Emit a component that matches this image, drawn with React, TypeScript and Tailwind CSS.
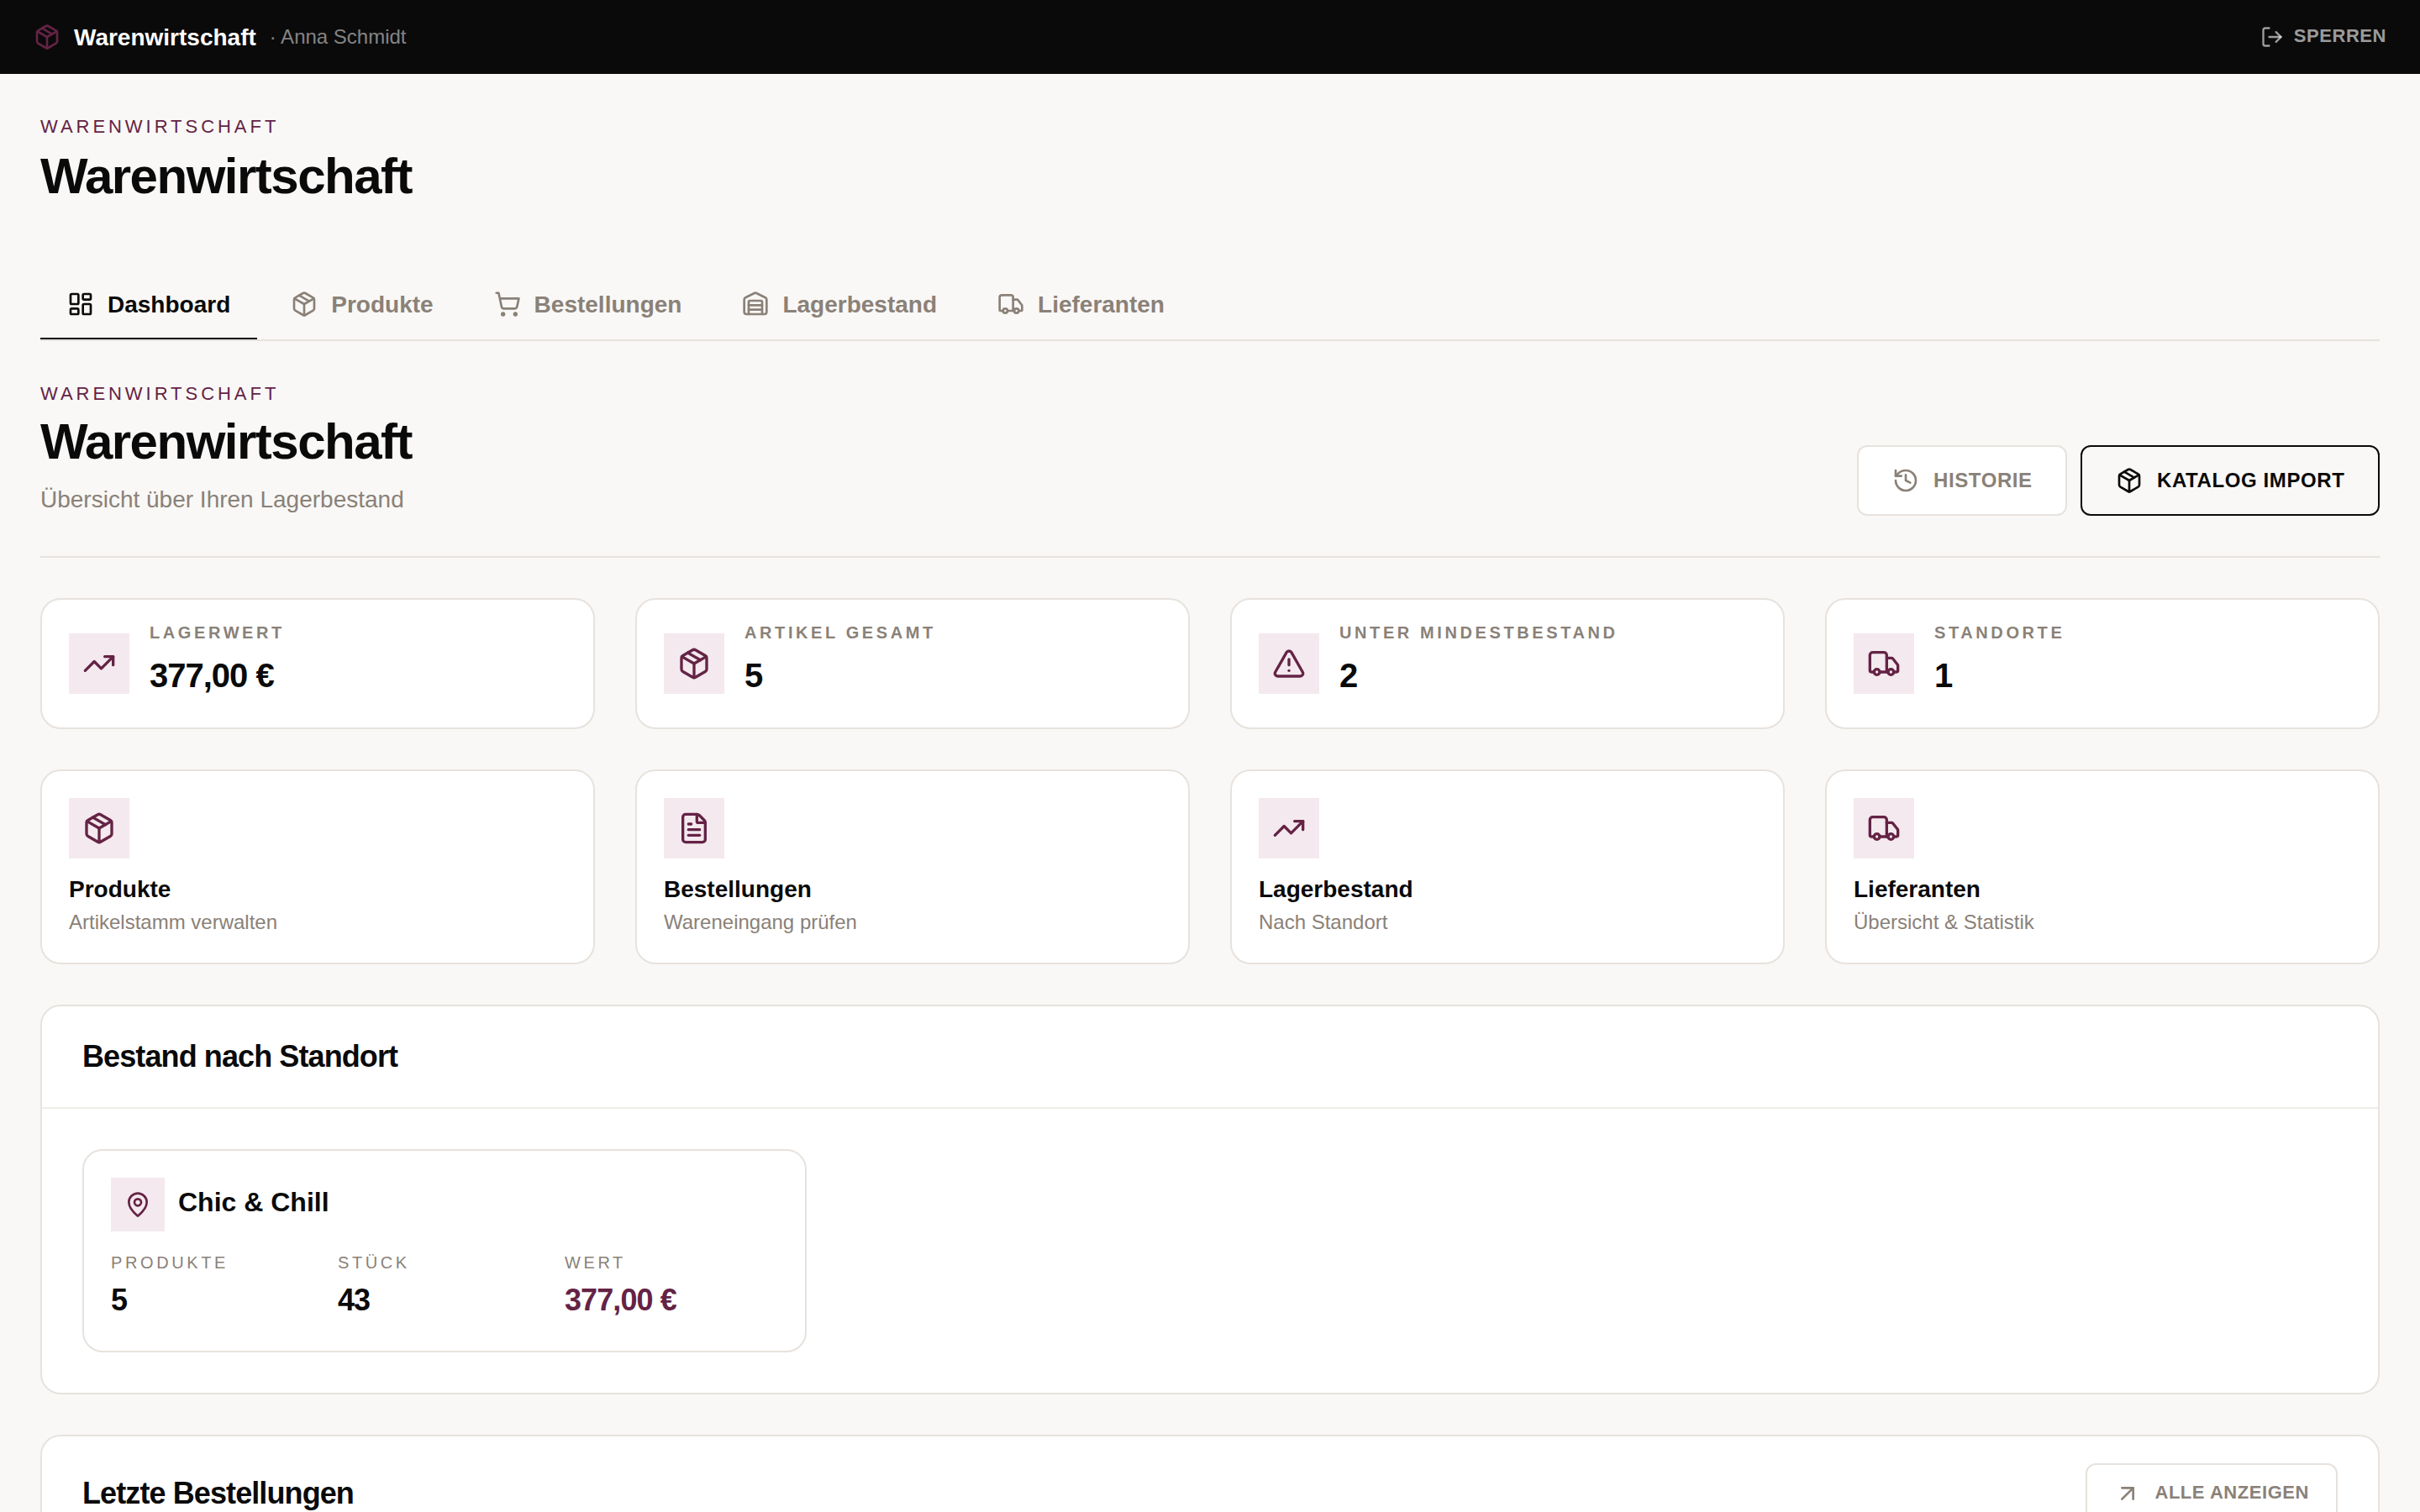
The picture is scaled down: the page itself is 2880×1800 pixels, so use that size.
import React from "react";
import {
  ArrowUpRight,
  FileText,
  History,
  LayoutDashboard,
  LogOut,
  MapPin,
  Package,
  ShoppingCart,
  TrendingUp,
  TriangleAlert,
  Truck,
  Warehouse,
} from "lucide-react";

const tabs = [
  { label: "Dashboard", icon: LayoutDashboard, active: true },
  { label: "Produkte", icon: Package },
  { label: "Bestellungen", icon: ShoppingCart },
  { label: "Lagerbestand", icon: Warehouse },
  { label: "Lieferanten", icon: Truck },
];

const stats = [
  { label: "Lagerwert", value: "377,00 €", icon: TrendingUp },
  { label: "Artikel gesamt", value: "5", icon: Package },
  { label: "Unter Mindestbestand", value: "2", icon: TriangleAlert },
  { label: "Standorte", value: "1", icon: Truck },
];

const links = [
  { title: "Produkte", text: "Artikelstamm verwalten", icon: Package },
  { title: "Bestellungen", text: "Wareneingang prüfen", icon: FileText },
  { title: "Lagerbestand", text: "Nach Standort", icon: TrendingUp },
  { title: "Lieferanten", text: "Übersicht & Statistik", icon: Truck },
];

const location = {
  name: "Chic & Chill",
  figures: [
    { label: "Produkte", value: "5" },
    { label: "Stück", value: "43" },
    { label: "Wert", value: "377,00 €", accent: true },
  ],
};

const TopBar = () => (
  <header className="flex h-[88px] items-center justify-between bg-[#0a0a0a] px-10">
    <div className="flex items-center gap-4">
      <Package size={32} className="text-[#642345]" />
      <span className="pt-0.5 text-[28px] leading-10 font-bold text-white">
        Warenwirtschaft
      </span>
      <span className="text-2xl text-white/50">· Anna Schmidt</span>
    </div>
    <button className="flex items-center gap-3 text-[22px] leading-8 font-bold tracking-wide text-white/60 uppercase">
      <LogOut size={28} />
      <span className="pb-0.5">Sperren</span>
    </button>
  </header>
);

const Overline = () => (
  <p className="text-[22px] leading-[30px] tracking-[0.18em] text-[#642345] uppercase">
    Warenwirtschaft
  </p>
);

const IconBox = ({ icon: Icon }: { icon: React.ElementType }) => (
  <div className="flex size-[72px] shrink-0 items-center justify-center bg-[#f4e9ee] text-[#642345]">
    <Icon size={40} />
  </div>
);

const App = () => {
  return (
    <div className="h-[1800px] w-[2880px] overflow-hidden bg-[#f9f8f6] font-['Liberation_Sans',Arial,sans-serif] text-[#0a0a0a]">
      <TopBar />

      <main className="px-12 pt-12">
        <Overline />
        <h1 className="mt-2 text-[60px] leading-[72px] font-bold tracking-tight">
          Warenwirtschaft
        </h1>

        <nav className="mt-[74px] flex gap-2 border-b-2 border-[#e7e2dd]">
          {tabs.map(({ label, icon: Icon, active }) => (
            <button
              key={label}
              className={`flex h-[84px] items-center gap-4 border-b-2 px-8 pt-0.5 text-[28px] leading-[42px] font-bold ${
                active
                  ? "border-[#0a0a0a] text-[#0a0a0a]"
                  : "border-transparent text-[#8a8178]"
              }`}
            >
              <Icon size={32} />
              <span className="pt-0.5">{label}</span>
            </button>
          ))}
        </nav>

        <div className="flex items-end justify-between border-b-2 border-[#e7e2dd] py-12">
          <div>
            <Overline />
            <h2 className="mt-1.5 text-[60px] leading-[72px] font-bold tracking-tight">
              Warenwirtschaft
            </h2>
            <p className="mt-[13px] text-[28px] leading-[39px] text-[#8a8178]">
              Übersicht über Ihren Lagerbestand
            </p>
          </div>
          <div className="flex gap-4 text-2xl font-bold tracking-wide">
            <button className="flex h-[84px] w-[250px] items-center gap-[17px] rounded-xl border-2 border-[#e7e2dd] bg-white pl-10 text-[#8a8178] uppercase">
              <History size={32} />
              Historie
            </button>
            <button className="flex h-[84px] w-[356px] items-center gap-[17px] rounded-xl border-2 border-[#0a0a0a] pl-10 uppercase">
              <Package size={32} />
              Katalog Import
            </button>
          </div>
        </div>

        <div className="mt-12 grid grid-cols-4 gap-12">
          {stats.map((stat) => (
            <div
              key={stat.label}
              className="flex items-center gap-6 rounded-3xl border-2 border-[#e7e2dd] bg-white px-8 py-6"
            >
              <IconBox icon={stat.icon} />
              <div className="pb-2">
                <p className="text-xl leading-[30px] font-bold tracking-[0.18em] text-[#8a8178] uppercase">
                  {stat.label}
                </p>
                <p className="mt-1.5 text-[40px] leading-[60px] font-bold tracking-tight">
                  {stat.value}
                </p>
              </div>
            </div>
          ))}
        </div>

        <div className="mt-12 grid grid-cols-4 gap-12">
          {links.map((link) => (
            <div
              key={link.title}
              className="rounded-3xl border-2 border-[#e7e2dd] bg-white p-8"
            >
              <IconBox icon={link.icon} />
              <h3 className="mt-[17px] text-[28px] leading-10 font-bold">
                {link.title}
              </h3>
              <p className="mt-[3px] text-2xl leading-8 text-[#8a8178]">
                {link.text}
              </p>
            </div>
          ))}
        </div>

        <section className="mt-12 rounded-3xl border-2 border-[#e7e2dd] bg-white">
          <div className="border-b-2 border-[#f0edea] px-12 py-8">
            <h2 className="text-4xl leading-14 font-bold tracking-tight">
              Bestand nach Standort
            </h2>
          </div>
          <div className="grid grid-cols-3 gap-[49px] p-12">
            <div className="rounded-3xl border-2 border-[#e7e2dd] p-8">
              <div className="flex items-center gap-4">
                <div className="flex size-16 items-center justify-center bg-[#f4e9ee] text-[#642345]">
                  <MapPin size={32} />
                </div>
                <h3 className="pb-1.5 text-[32px] leading-11 font-bold">
                  {location.name}
                </h3>
              </div>
              <div className="mt-[22px] grid grid-cols-3 gap-4">
                {location.figures.map((figure) => (
                  <div key={figure.label}>
                    <p className="text-xl leading-[30px] tracking-[0.18em] text-[#8a8178] uppercase">
                      {figure.label}
                    </p>
                    <p
                      className={`mt-0.5 text-4xl leading-14 font-bold tracking-tight ${
                        figure.accent ? "text-[#642345]" : ""
                      }`}
                    >
                      {figure.value}
                    </p>
                  </div>
                ))}
              </div>
            </div>
          </div>
        </section>

        <section className="mt-12 rounded-3xl border-2 border-[#e7e2dd] bg-white">
          <div className="flex items-center justify-between border-b-2 border-[#f0edea] px-12 py-8">
            <h2 className="text-4xl leading-14 font-bold tracking-tight">
              Letzte Bestellungen
            </h2>
            <button className="flex h-[72px] items-center gap-4 rounded-xl border-2 border-[#e7e2dd] bg-white px-8 text-[22px] leading-8 font-bold tracking-wide text-[#8a8178] uppercase">
              <ArrowUpRight size={32} />
              <span className="pb-0.5">Alle anzeigen</span>
            </button>
          </div>
        </section>
      </main>
    </div>
  );
};

export default App;
